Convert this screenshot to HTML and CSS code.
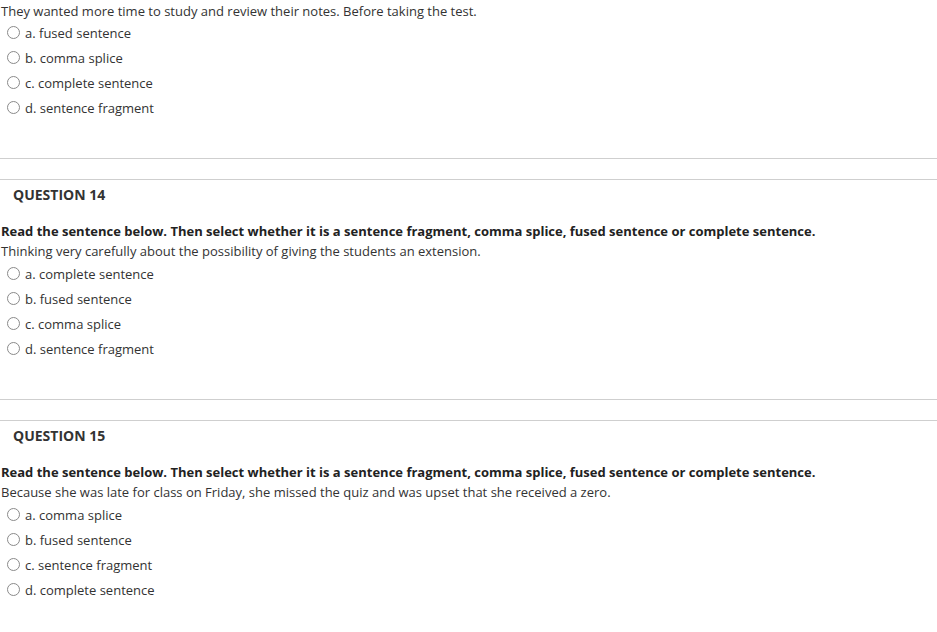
FILE: index.html
```html
<!DOCTYPE html>
<html lang="en">
<head>
<meta charset="utf-8">
<title>Quiz</title>
<link rel="stylesheet" href="styles.css">
</head>
<body>
<div class="page">
  <section class="question first">
    <p class="stem">They wanted more time to study and review their notes. Before taking the test.</p>
    <ul class="options">
      <li class="option"><span class="radio"></span><span>a. fused sentence</span></li>
      <li class="option"><span class="radio"></span><span>b. comma splice</span></li>
      <li class="option"><span class="radio"></span><span>c. complete sentence</span></li>
      <li class="option"><span class="radio"></span><span>d. sentence fragment</span></li>
    </ul>
  </section>
  <div class="divider"></div>
  <section class="question">
    <h2 class="q-title">QUESTION 14</h2>
    <p class="instruction">Read the sentence below. Then select whether it is a sentence fragment, comma splice, fused sentence or complete sentence.</p>
    <p class="stem">Thinking very carefully about the possibility of giving the students an extension.</p>
    <ul class="options">
      <li class="option"><span class="radio"></span><span>a. complete sentence</span></li>
      <li class="option"><span class="radio"></span><span>b. fused sentence</span></li>
      <li class="option"><span class="radio"></span><span>c. comma splice</span></li>
      <li class="option"><span class="radio"></span><span>d. sentence fragment</span></li>
    </ul>
  </section>
  <div class="divider"></div>
  <section class="question">
    <h2 class="q-title">QUESTION 15</h2>
    <p class="instruction">Read the sentence below. Then select whether it is a sentence fragment, comma splice, fused sentence or complete sentence.</p>
    <p class="stem">Because she was late for class on Friday, she missed the quiz and was upset that she received a zero.</p>
    <ul class="options">
      <li class="option"><span class="radio"></span><span>a. comma splice</span></li>
      <li class="option"><span class="radio"></span><span>b. fused sentence</span></li>
      <li class="option"><span class="radio"></span><span>c. sentence fragment</span></li>
      <li class="option"><span class="radio"></span><span>d. complete sentence</span></li>
    </ul>
  </section>
</div>
</body>
</html>
```
FILE: styles.css
```css
* { box-sizing: border-box; }
html, body { margin: 0; padding: 0; background: #fff; }
body {
  font-family: "Open Sans", "Liberation Sans", sans-serif;
  font-size: 13px;
  line-height: 20px;
  color: #333;
}
.page { padding-top: 1px; }
.question { display: flex; flex-direction: column; }
.stem, .instruction, .q-title { margin: 0; padding-left: 1px; }
.instruction { font-weight: 700; color: #222; }
.q-title {
  font-size: 14px;
  font-weight: 700;
  padding-left: 13px;
  margin-top: 5px;
  margin-bottom: 16px;
  color: #333;
}
.first .options { margin-top: -1px; }
.options { list-style: none; margin: 0; padding: 0; }
.option {
  display: flex;
  align-items: center;
  height: 25px;
  padding-left: 7px;
  gap: 5px;
}
.radio {
  width: 13px;
  height: 13px;
  border-radius: 50%;
  border: 1px solid #8a8a8a;
  background: #fff;
  flex: none;
}
.divider {
  margin-top: 38px;
  border-top: 1px solid #cfcfcf;
  border-bottom: 1px solid #cfcfcf;
  height: 22px;
}
```
